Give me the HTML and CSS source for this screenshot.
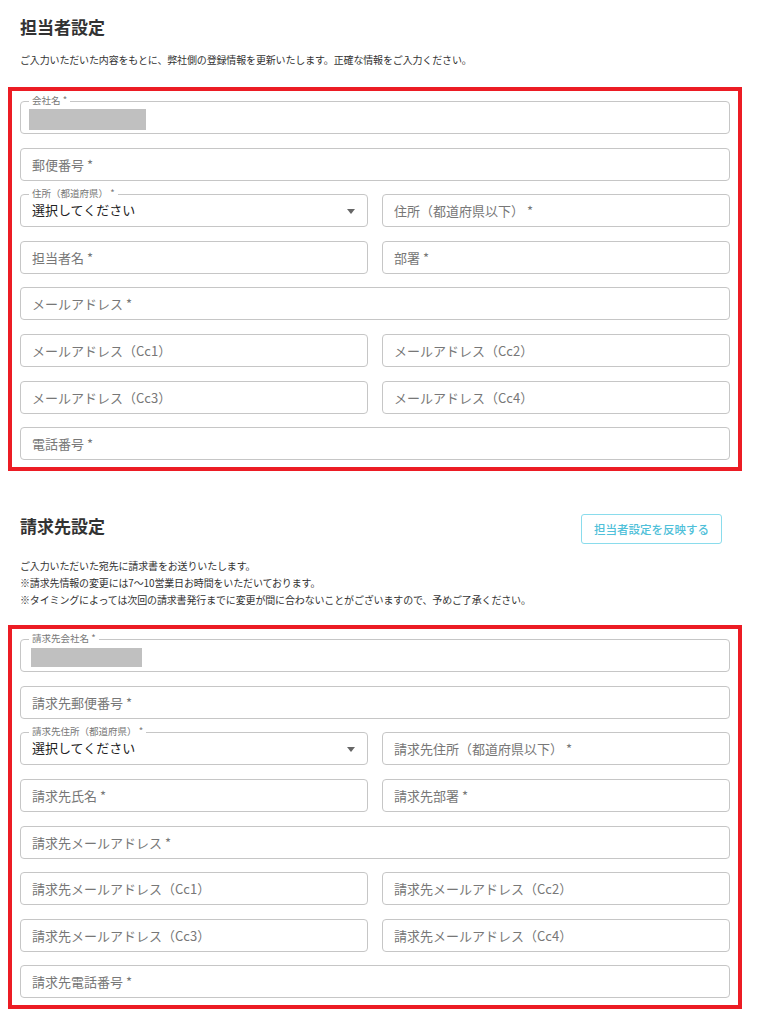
FILE: index.html
```html
<!DOCTYPE html>
<html>
<head>
  <meta charset="utf-8">
  <title>担当者設定</title>
  <link rel="stylesheet" href="styles.css">
</head>
<body>
  <div class="page">
    <div class="head">
      <h2 class="title">担当者設定</h2>
    </div>
    <p class="intro">ご入力いただいた内容をもとに、弊社側の登録情報を更新いたします。正確な情報をご入力ください。</p>
    <div class="box">
      <div class="fields">
        <div class="field full filled">
          <span class="float">会社名 *</span>
          <span class="mask"></span>
        </div>
        <input class="field full" placeholder="郵便番号 *">
        <div class="field select">
          <span class="float">住所（都道府県） *</span>
          <span class="value">選択してください</span>
          <span class="arrow"></span>
        </div>
        <input class="field" placeholder="住所（都道府県以下） *">
        <input class="field" placeholder="担当者名 *">
        <input class="field" placeholder="部署 *">
        <input class="field full" placeholder="メールアドレス *">
        <input class="field" placeholder="メールアドレス（Cc1）">
        <input class="field" placeholder="メールアドレス（Cc2）">
        <input class="field" placeholder="メールアドレス（Cc3）">
        <input class="field" placeholder="メールアドレス（Cc4）">
        <input class="field full" placeholder="電話番号 *">
      </div>
    </div>

    <div class="head second">
      <h2 class="title">請求先設定</h2>
      <button class="copy-btn">担当者設定を反映する</button>
    </div>
    <p class="intro notes">ご入力いただいた宛先に請求書をお送りいたします。<br>※請求先情報の変更には7〜10営業日お時間をいただいております。<br>※タイミングによっては次回の請求書発行までに変更が間に合わないことがございますので、予めご了承ください。</p>
    <div class="box">
      <div class="fields">
        <div class="field full filled">
          <span class="float">請求先会社名 *</span>
          <span class="mask mask2"></span>
        </div>
        <input class="field full" placeholder="請求先郵便番号 *">
        <div class="field select">
          <span class="float">請求先住所（都道府県） *</span>
          <span class="value">選択してください</span>
          <span class="arrow"></span>
        </div>
        <input class="field" placeholder="請求先住所（都道府県以下） *">
        <input class="field" placeholder="請求先氏名 *">
        <input class="field" placeholder="請求先部署 *">
        <input class="field full" placeholder="請求先メールアドレス *">
        <input class="field" placeholder="請求先メールアドレス（Cc1）">
        <input class="field" placeholder="請求先メールアドレス（Cc2）">
        <input class="field" placeholder="請求先メールアドレス（Cc3）">
        <input class="field" placeholder="請求先メールアドレス（Cc4）">
        <input class="field full" placeholder="請求先電話番号 *">
      </div>
    </div>
  </div>
</body>
</html>
```

FILE: styles.css
```css
body {
  margin: 0;
  background: #fff;
  color: #333;
  font-family: "Noto Sans CJK JP", "Noto Sans", sans-serif;
}

.page {
  width: 734px;
  margin-left: 8px;
  padding-top: 15px;
}

.head {
  display: flex;
  justify-content: space-between;
  align-items: flex-start;
  padding: 0 20px 0 12px;
}

.head.second {
  margin-top: 43px;
}

.title {
  margin: 0;
  font-size: 17px;
  line-height: 24px;
  font-weight: bold;
  color: #333;
}

.copy-btn {
  height: 30px;
  width: 141px;
  padding: 0;
  border: 1px solid #8adcec;
  border-radius: 3px;
  background: #fff;
  color: #4fc0d9;
  font-family: inherit;
  font-size: 11.5px;
  font-weight: 500;
}

.intro {
  margin: 12px 0 19px;
  padding-left: 12px;
  font-size: 10px;
  line-height: 17px;
  letter-spacing: -0.15px;
  color: #333;
}

.intro.notes {
  margin: 13px 0 17px;
}

.box {
  border: 4px solid #ec1c24;
  padding: 10px 8px 7px;
}

.fields {
  display: grid;
  grid-template-columns: 1fr 1fr;
  column-gap: 14px;
  row-gap: 13.6px;
}

.field {
  box-sizing: border-box;
  height: 33px;
  width: 100%;
  margin: 0;
  padding: 0 11px;
  border: 1px solid #c6c6c6;
  border-radius: 4px;
  background: #fff;
  font-family: inherit;
  font-size: 13px;
  color: #222;
  position: relative;
}

.field::placeholder {
  color: #777;
}

.full {
  grid-column: span 2;
}

.float {
  position: absolute;
  top: -7px;
  left: 8px;
  padding: 0 3px;
  background: #fff;
  font-size: 9.5px;
  line-height: 10px;
  color: #777;
}

.mask {
  position: absolute;
  top: 7px;
  left: 8px;
  width: 117px;
  height: 21px;
  background: #c0c0c0;
}

.mask2 {
  top: 8px;
  left: 10px;
  width: 111px;
  height: 19px;
}

.select .value {
  display: block;
  padding-top: 6px;
  line-height: 17px;
  font-size: 13px;
  color: #222;
}

.arrow {
  position: absolute;
  right: 12px;
  top: 14px;
  width: 0;
  height: 0;
  border-left: 4.5px solid transparent;
  border-right: 4.5px solid transparent;
  border-top: 5px solid #666;
}
```
